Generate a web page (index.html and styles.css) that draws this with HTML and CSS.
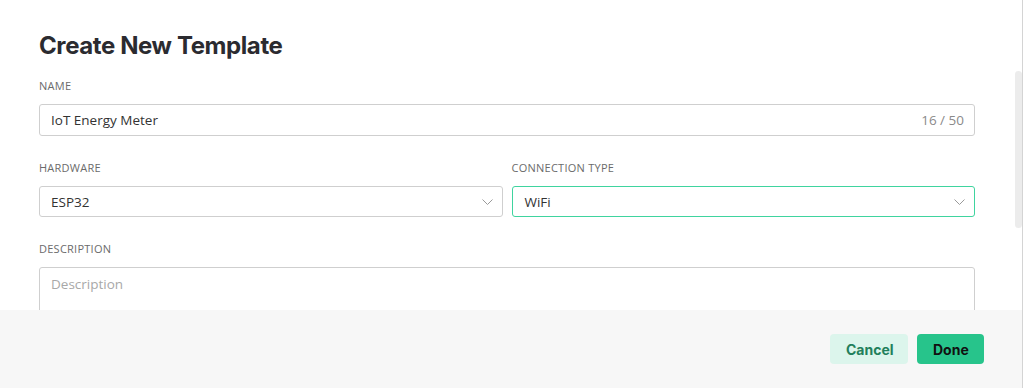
FILE: index.html
```html
<!DOCTYPE html>
<html lang="en">
<head>
    <meta charset="UTF-8">
    <meta name="viewport" content="width=device-width, initial-scale=1.0">
    <title>Create New Template</title>
    <link rel="stylesheet" href="styles.css">
</head>
<body>
    <div class="modal">
        <section class="modal-body">
            <h1>Create New Template</h1>

            <div class="field">
                <label>Name</label>
                <div class="input">
                    <span class="value">IoT Energy Meter</span>
                    <span class="counter">16 / 50</span>
                </div>
            </div>

            <div class="row">
                <div class="field">
                    <label>Hardware</label>
                    <div class="select">
                        <span class="value">ESP32</span>
                        <svg class="chevron" width="11" height="6" viewBox="0 0 11 6"><path d="M0.5 0.5 L5.5 5.5 L10.5 0.5" fill="none" stroke="#9a9a9a" stroke-width="1"/></svg>
                    </div>
                </div>
                <div class="field">
                    <label>Connection Type</label>
                    <div class="select active">
                        <span class="value">WiFi</span>
                        <svg class="chevron" width="11" height="6" viewBox="0 0 11 6"><path d="M0.5 0.5 L5.5 5.5 L10.5 0.5" fill="none" stroke="#9a9a9a" stroke-width="1"/></svg>
                    </div>
                </div>
            </div>

            <div class="field">
                <label>Description</label>
                <div class="textarea">
                    <span class="placeholder">Description</span>
                </div>
            </div>
        </section>

        <section class="modal-footer">
            <button class="btn cancel">Cancel</button>
            <button class="btn done">Done</button>
        </section>

        <div class="scroll-thumb"></div>
    </div>
</body>
</html>
```

FILE: styles.css
```css
* {
    margin: 0;
    padding: 0;
    box-sizing: border-box;
}

body {
    background-color: #fff;
    font-family: 'Open Sans', sans-serif;
    height: 100vh;
    overflow: hidden;
}

.modal {
    position: relative;
    width: 1023px;
    height: 388px;
    border-right: 1px solid #d4d4d4;
    display: flex;
    flex-direction: column;
}

.modal-body {
    flex: 1;
    overflow: hidden;
    padding: 30px 47px 0 39px;

    h1 {
        font-family: 'Inter', sans-serif;
        font-size: 24px;
        line-height: 32px;
        font-weight: 700;
        letter-spacing: -0.4px;
        color: #2b2b30;
        margin-bottom: 16px;
    }
}

.field {
    margin-bottom: 24px;

    label {
        display: block;
        font-size: 11px;
        line-height: 16px;
        letter-spacing: 0.25px;
        text-transform: uppercase;
        color: #6b6b6b;
        margin-bottom: 10px;
    }
}

.row {
    display: flex;
    gap: 9px;

    .field {
        flex: 1;
    }
}

.input,
.select,
.textarea {
    border: 1px solid #cfcfcf;
    border-radius: 3px;
    font-size: 13.5px;
    color: #333;
    background-color: #fff;
}

.input,
.select {
    height: 32px;
    display: flex;
    align-items: center;
    justify-content: space-between;
    padding: 0 10px 0 11px;
    line-height: 30px;
}

.select {
    height: 31px;
    padding-right: 9px;

    &.active {
        border-color: #3fd49f;
        padding-left: 12px;
    }
}

.counter {
    color: #8a8a8a;
}

.textarea {
    height: 80px;
    padding: 6px 11px;
    line-height: 20px;

    .placeholder {
        color: #a8a8a8;
    }
}

.modal-footer {
    height: 78px;
    background-color: #f7f7f7;
    display: flex;
    justify-content: flex-end;
    align-items: flex-start;
    gap: 9px;
    padding: 24px 38px 0 0;
}

.btn {
    height: 30px;
    padding: 0 16px;
    border: none;
    border-radius: 4px;
    font-family: 'Inter', sans-serif;
    font-size: 14px;
    font-weight: 700;
    cursor: pointer;

    &.cancel {
        width: 78px;
        background-color: #dcf5ec;
        color: #227f5b;
    }

    &.done {
        width: 67px;
        background-color: #27c48b;
        color: #111;
    }
}

.scroll-thumb {
    position: absolute;
    top: 71px;
    left: 1015px;
    width: 7px;
    height: 157px;
    border-radius: 4px;
    background-color: #ececec;
}
```
